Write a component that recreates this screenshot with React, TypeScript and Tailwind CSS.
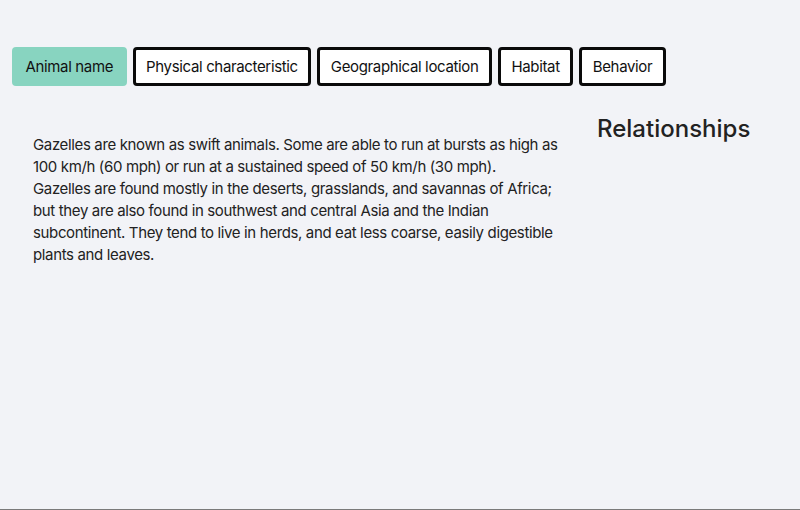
import React, { useState } from "react";

const tabs = ["Animal name", "Physical characteristic", "Geographical location", "Habitat", "Behavior"];

const lines = [
  "Gazelles are known as swift animals. Some are able to run at bursts as high as",
  "100 km/h (60 mph) or run at a sustained speed of 50 km/h (30 mph).",
  "Gazelles are found mostly in the deserts, grasslands, and savannas of Africa;",
  "but they are also found in southwest and central Asia and the Indian",
  "subcontinent. They tend to live in herds, and eat less coarse, easily digestible",
  "plants and leaves.",
];

export default function App() {
  const [active, setActive] = useState(0);
  return (
    <div className="w-[800px] h-[510px] bg-[#f2f3f7] text-[#1d1d1f] overflow-hidden border-b border-[#7a7a7a]" style={{ fontFamily: "Inter, 'Liberation Sans', sans-serif" }}>
      <div className="flex gap-[6px] pl-[12px] pt-[47px]">
        {tabs.map((t, i) => (
          <button
            key={t}
            onClick={() => setActive(i)}
            className={
              "h-[39px] px-[10.5px] rounded-[4px] border-[3px] text-[15px] tracking-[-0.35px] leading-none text-[#111] " +
              (i === active ? "bg-[#88d4c0] border-[#88d4c0]" : "bg-white border-[#0a0a0a]")
            }
          >
            {t}
          </button>
        ))}
      </div>
      <div className="flex pt-[28px]">
        <p className="w-[564px] shrink-0 pl-[33px] pt-[20px] text-[15px] tracking-[-0.36px] leading-[22px] text-[#222] whitespace-nowrap">
          {lines.map((l, i) => (
            <React.Fragment key={i}>
              {l}
              {i < lines.length - 1 && <br />}
            </React.Fragment>
          ))}
        </p>
        <div className="pl-[33px]">
          <h2 className="text-[24px] leading-[30px] font-medium text-[#222]">Relationships</h2>
        </div>
      </div>
    </div>
  );
}
